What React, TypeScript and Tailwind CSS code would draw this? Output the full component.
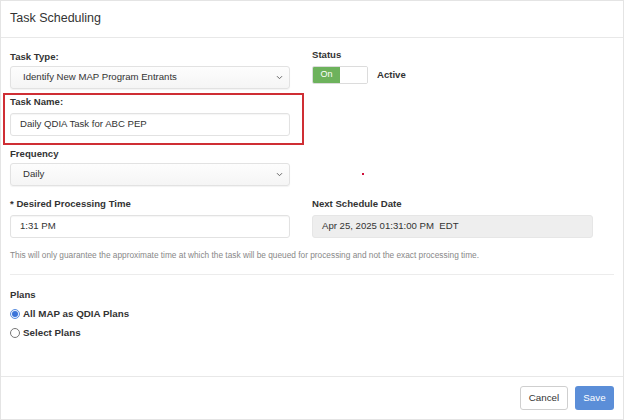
import React from "react";

function Chevron() {
  return (
    <svg width="7" height="5" viewBox="0 0 7 5" className="shrink-0">
      <path d="M1 1.2l2.5 2.5 2.5-2.5" fill="none" stroke="#666" strokeWidth="1" />
    </svg>
  );
}

function SelectBox({ value }: { value: string }) {
  return (
    <div className="h-[23px] w-[280px] flex items-center justify-between pl-[12px] pr-[6px] rounded-[3px] border border-[#e2e2e2] bg-gradient-to-b from-[#fdfdfd] to-[#f5f5f5] shadow-[0_1px_1px_rgba(0,0,0,0.05)] text-[9.6px] text-[#333]">
      <span>{value}</span>
      <Chevron />
    </div>
  );
}

function TextBox({ value, gray = false, w = "w-[280px]" }: { value: string; gray?: boolean; w?: string }) {
  return (
    <div
      className={`h-[23px] ${w} flex items-center pl-[9px] rounded-[3px] border text-[9.6px] text-[#333] whitespace-pre ${
        gray ? "bg-[#eeeeee] border-[#e6e6e6]" : "bg-white border-[#e2e2e2] shadow-[inset_0_1px_1px_rgba(0,0,0,0.04)]"
      }`}
    >
      {value}
    </div>
  );
}

function Label({ children }: { children: React.ReactNode }) {
  return <div className="text-[9.6px] leading-[12px] font-bold text-[#333]">{children}</div>;
}

export default function App() {
  return (
    <div
      className="w-[624px] h-[420px] bg-white border border-[#e4e4e4] flex flex-col text-[#333]"
      style={{ fontFamily: '"Liberation Sans", Arial, sans-serif' }}
    >
      <div className="h-[37px] shrink-0 border-b border-[#e8e8e8] flex items-center pl-[9px] pb-[2px]">
        <span className="text-[12.5px] text-[#333]">Task Scheduling</span>
      </div>

      <div className="pl-[9px] pr-[9px]">
        {/* Row 1 */}
        <div className="flex gap-x-[22px]">
          <div className="w-[280px] pt-[13px]">
            <Label>Task Type:</Label>
            <div className="mt-[3px]">
              <SelectBox value="Identify New MAP Program Entrants" />
            </div>
          </div>
          <div className="pt-[11px]">
            <Label>Status</Label>
            <div className="mt-[5px] flex items-center">
              <div className="h-[18px] w-[56px] flex rounded-[2px] border border-[#dcdcdc] overflow-hidden">
                <div className="w-[27px] bg-[#6db25c] text-white text-[9px] flex items-center justify-center">On</div>
                <div className="flex-1 bg-white"></div>
              </div>
              <span className="ml-[9px] text-[9.6px] font-bold text-[#333]">Active</span>
            </div>
          </div>
        </div>

        {/* Task Name highlighted */}
        <div className="mt-[4px] ml-[-7px] w-[301px] border-2 border-[#cf2e34] pl-[5px] pt-[1px] pb-[7px]">
          <Label>Task Name:</Label>
          <div className="mt-[5px]">
            <TextBox value="Daily QDIA Task for ABC PEP" />
          </div>
        </div>

        {/* Frequency */}
        <div className="flex gap-x-[22px]">
          <div className="w-[280px] pt-[3px]">
            <Label>Frequency</Label>
            <div className="mt-[3px]">
              <SelectBox value="Daily" />
            </div>
          </div>
          <div className="pt-[28px] pl-[50px]">
            <div className="w-[2px] h-[2px] bg-[#d0103a]"></div>
          </div>
        </div>

        {/* Desired / Next */}
        <div className="flex gap-x-[22px] mt-[12px]">
          <div className="w-[280px]">
            <Label>* Desired Processing Time</Label>
            <div className="mt-[5px]">
              <TextBox value="1:31 PM" />
            </div>
          </div>
          <div>
            <Label>Next Schedule Date</Label>
            <div className="mt-[5px]">
              <TextBox value="Apr 25, 2025 01:31:00 PM  EDT" gray w="w-[281px]" />
            </div>
          </div>
        </div>

        <div className="mt-[12px] text-[8.3px] leading-[10px] text-[#888]">
          This will only guarantee the approximate time at which the task will be queued for processing and not the exact processing time.
        </div>

        <div className="mt-[14px] border-t border-[#ececec]"></div>

        <div className="mt-[14px]">
          <Label>Plans</Label>
        </div>
        <div className="mt-[7px] flex items-center h-[12px]">
          <span className="w-[10px] h-[10px] rounded-full border border-[#5a8ee0] bg-[#e8f0fc] flex items-center justify-center">
            <span className="w-[6px] h-[6px] rounded-full bg-[#3b74d9]"></span>
          </span>
          <span className="ml-[3px] text-[9.8px] font-bold text-[#333]">All MAP as QDIA Plans</span>
        </div>
        <div className="mt-[7px] flex items-center h-[12px]">
          <span className="w-[10px] h-[10px] rounded-full border border-[#777] bg-white"></span>
          <span className="ml-[3px] text-[9.8px] font-bold text-[#333]">Select Plans</span>
        </div>
      </div>

      <div className="flex-1"></div>

      <div className="h-[43px] shrink-0 border-t border-[#e8e8e8] flex justify-end items-start pt-[9px] pr-[9px] gap-x-[7px]">
        <button className="h-[24px] w-[48px] rounded-[3px] border border-[#cfcfcf] bg-white text-[9.8px] text-[#333]">Cancel</button>
        <button className="h-[24px] w-[39px] rounded-[3px] bg-[#5b8ed8] text-[9.8px] text-white">Save</button>
      </div>
    </div>
  );
}
